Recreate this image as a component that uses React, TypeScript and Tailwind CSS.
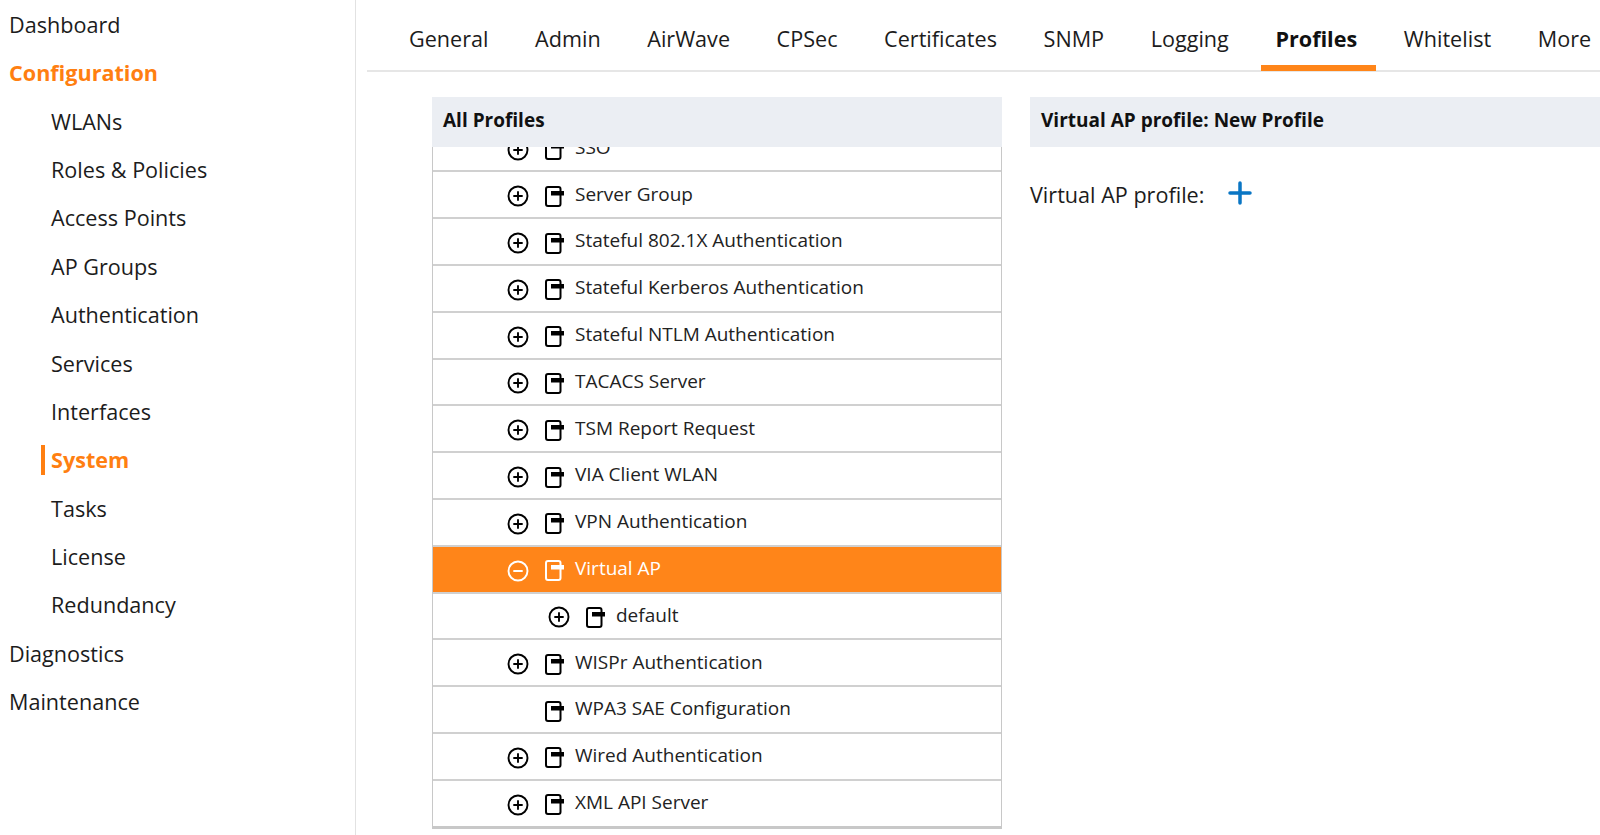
import { clsx } from "clsx";

const sideItems = [
  { label: "Dashboard", level: 0 },
  { label: "Configuration", level: 0, active: true },
  { label: "WLANs", level: 1 },
  { label: "Roles & Policies", level: 1 },
  { label: "Access Points", level: 1 },
  { label: "AP Groups", level: 1 },
  { label: "Authentication", level: 1 },
  { label: "Services", level: 1 },
  { label: "Interfaces", level: 1 },
  { label: "System", level: 1, active: true, marked: true },
  { label: "Tasks", level: 1 },
  { label: "License", level: 1 },
  { label: "Redundancy", level: 1 },
  { label: "Diagnostics", level: 0 },
  { label: "Maintenance", level: 0 },
];

const tabs = ["General", "Admin", "AirWave", "CPSec", "Certificates", "SNMP", "Logging", "Profiles", "Whitelist", "More"];

const rows = [
  { label: "SSO" },
  { label: "Server Group" },
  { label: "Stateful 802.1X Authentication" },
  { label: "Stateful Kerberos Authentication" },
  { label: "Stateful NTLM Authentication" },
  { label: "TACACS Server" },
  { label: "TSM Report Request" },
  { label: "VIA Client WLAN" },
  { label: "VPN Authentication" },
  { label: "Virtual AP", selected: true },
  { label: "default", child: true },
  { label: "WISPr Authentication" },
  { label: "WPA3 SAE Configuration", leaf: true },
  { label: "Wired Authentication" },
  { label: "XML API Server" },
];

function ExpandIcon({ open }: { open?: boolean }) {
  return (
    <svg width="22" height="22" viewBox="0 0 22 22" fill="none" stroke="currentColor" strokeWidth="1.9" strokeLinecap="round">
      <circle cx="11" cy="11" r="9.5" />
      <path d="M7 11h8" />
      {!open && <path d="M11 7v8" />}
    </svg>
  );
}

function ProfileIcon() {
  return (
    <svg width="19" height="21" viewBox="0 0 19 21" fill="none" stroke="currentColor" strokeWidth="2">
      <path d="M15.5 9v9a2 2 0 0 1-2 2H3a2 2 0 0 1-2-2V3a2 2 0 0 1 2-2h10.5a2 2 0 0 1 2 2v2" />
      <rect x="6" y="5" width="13" height="4.5" fill="currentColor" stroke="none" />
    </svg>
  );
}

function Sidebar() {
  return (
    <div className="w-[356px] shrink-0 border-r border-[#e2e2e2] pt-px">
      {sideItems.map((item) => (
        <div
          key={item.label}
          className={clsx(
            "flex h-[48.37px] items-center text-[21.6px]",
            item.level === 0 ? "pl-[9px]" : "pl-[41px]",
            item.active ? "font-bold text-[#ff7f11]" : "text-[#1c1c1c]",
          )}
        >
          {item.level === 1 && (
            <span className={clsx("mr-[6px] h-[30px] w-1", item.marked && "bg-[#ff7f11]")} />
          )}
          {item.label}
        </div>
      ))}
    </div>
  );
}

function Tabs() {
  return (
    <div className="ml-[11px] flex h-[72px] gap-[18.6px] border-b-2 border-[#e6e6e6] pl-[28px]">
      {tabs.map((tab) => (
        <div
          key={tab}
          className={clsx(
            "flex h-[71px] items-start pl-[14px] pt-[24px] text-[21.6px] leading-[30px]",
            tab === "Profiles"
              ? "-mr-[5px] border-b-[6px] border-[#ff8519] pr-[19px] font-bold text-[#111]"
              : "pr-[14px] text-[#1c1c1c]",
          )}
        >
          {tab}
        </div>
      ))}
    </div>
  );
}

function ProfileTree() {
  return (
    <div className="w-[570px] shrink-0">
      <div className="flex h-[50px] items-center bg-[#ebeef3] pb-1 pl-[11px] text-[19px] font-bold text-[#111]">
        All Profiles
      </div>
      <div className="h-[682px] overflow-hidden border-x border-b-[3px] border-[#c8c8c8]">
        <div className="-mt-[21.4px]">
          {rows.map((row) => (
            <div
              key={row.label}
              className={clsx(
                "flex h-[46.8px] items-center border-b-2 border-[#d0d0d0] text-[19px]",
                row.selected ? "bg-[#ff8519] text-white" : "text-[#222]",
                row.child ? "pl-[115px]" : "pl-[74px]",
              )}
            >
              <span className={clsx("mt-[3px] flex w-[22px] justify-center", !row.selected && "text-black")}>
                {!row.leaf && <ExpandIcon open={row.selected} />}
              </span>
              <span className={clsx("ml-[16px] mr-[11px] mt-[3px] flex", !row.selected && "text-black")}>
                <ProfileIcon />
              </span>
              <span className="-mt-[2px]">{row.label}</span>
            </div>
          ))}
        </div>
      </div>
    </div>
  );
}

function ProfileDetail() {
  return (
    <div className="min-w-0 flex-1">
      <div className="flex h-[50px] items-center bg-[#ebeef3] pb-1 pl-[11px] text-[19px] font-bold text-[#111]">
        Virtual AP profile: New Profile
      </div>
      <div className="mt-[32px] flex items-center text-[21.6px] text-[#1c1c1c]">
        <span>Virtual AP profile:</span>
        <svg className="ml-[24px] -mt-1" width="24" height="24" viewBox="0 0 24 24" fill="none" stroke="#0a76c4" strokeWidth="3.5" strokeLinecap="round">
          <path d="M12 2v20M2 12h20" />
        </svg>
      </div>
    </div>
  );
}

export default function App() {
  return (
    <div className="flex h-[835px] w-[1600px] overflow-hidden bg-white font-['Open_Sans',sans-serif]">
      <Sidebar />
      <div className="min-w-0 flex-1">
        <Tabs />
        <div className="mt-[25px] flex gap-[28px] pl-[76px]">
          <ProfileTree />
          <ProfileDetail />
        </div>
      </div>
    </div>
  );
}
